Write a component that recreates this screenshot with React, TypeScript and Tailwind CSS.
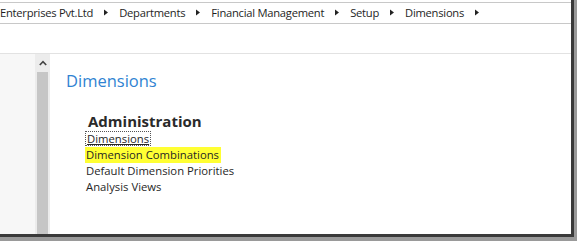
const crumbs = ['Enterprises Pvt.Ltd', 'Departments', 'Financial Management', 'Setup', 'Dimensions']

const links = ['Default Dimension Priorities', 'Analysis Views']

function Caret() {
  return (
    <svg width="4" height="7" viewBox="0 0 4 7" className="shrink-0">
      <path d="M0 0.5 L4 3.5 L0 6.5 Z" fill="#222" />
    </svg>
  )
}

export default function App() {
  return (
    <div className="flex h-[241px] w-[577px] flex-col overflow-hidden bg-[#9a9a9a] font-['Segoe_UI','Open_Sans',sans-serif]">
      <div className="flex h-[237px] w-[574px] flex-col border-r-[3px] border-b-[3px] border-[#3a3a3a] bg-white">
        <div className="mt-[2px] flex h-[22px] items-center gap-[11px] border-t border-b border-[#c8c8c8] text-[11.2px] tracking-[-0.25px] text-[#1e1e1e]">
          {crumbs.map((c) => (
            <span key={c} className="flex items-center gap-[11px] whitespace-nowrap">
              <span>{c}</span>
              <Caret />
            </span>
          ))}
        </div>
        <div className="h-[30px] border-b border-[#e2e2e2]" />
        <div className="flex min-h-0 flex-1">
          <div className="w-[35px] bg-[#f7f7f7]" />
          <div className="flex w-[15px] flex-col bg-[#ececec]">
            <div className="flex h-[18px] items-center justify-center">
              <svg width="8" height="6" viewBox="0 0 8 6">
                <path d="M0.8 5 L4 1.6 L7.2 5" fill="none" stroke="#444" strokeWidth="1.6" />
              </svg>
            </div>
            <div className="mx-[2px] flex-1 bg-[#c6c6c6]" />
          </div>
          <div className="flex-1 pl-[16px] pt-[16px]">
            <h1 className="text-[16.5px] leading-[22px] text-[#2f83d2]">Dimensions</h1>
            <div className="mt-[20px] pl-[19px] text-[11.3px] leading-[16px] text-[#262626]">
              <h2 className="pl-[3px] text-[15px] leading-[18px] font-bold text-[#2a2a2a]">Administration</h2>
              <div className="mt-[1px] flex">
                <span className="border border-dotted border-[#555] px-[1px] leading-[13px] underline">Dimensions</span>
              </div>
              <div className="mt-[1px] flex">
                <span className="bg-[#ffff33] pr-[2px] pl-[1px]">Dimension Combinations</span>
              </div>
              {links.map((l) => (
                <div key={l} className="pl-[1px]">
                  {l}
                </div>
              ))}
            </div>
          </div>
        </div>
      </div>
    </div>
  )
}
